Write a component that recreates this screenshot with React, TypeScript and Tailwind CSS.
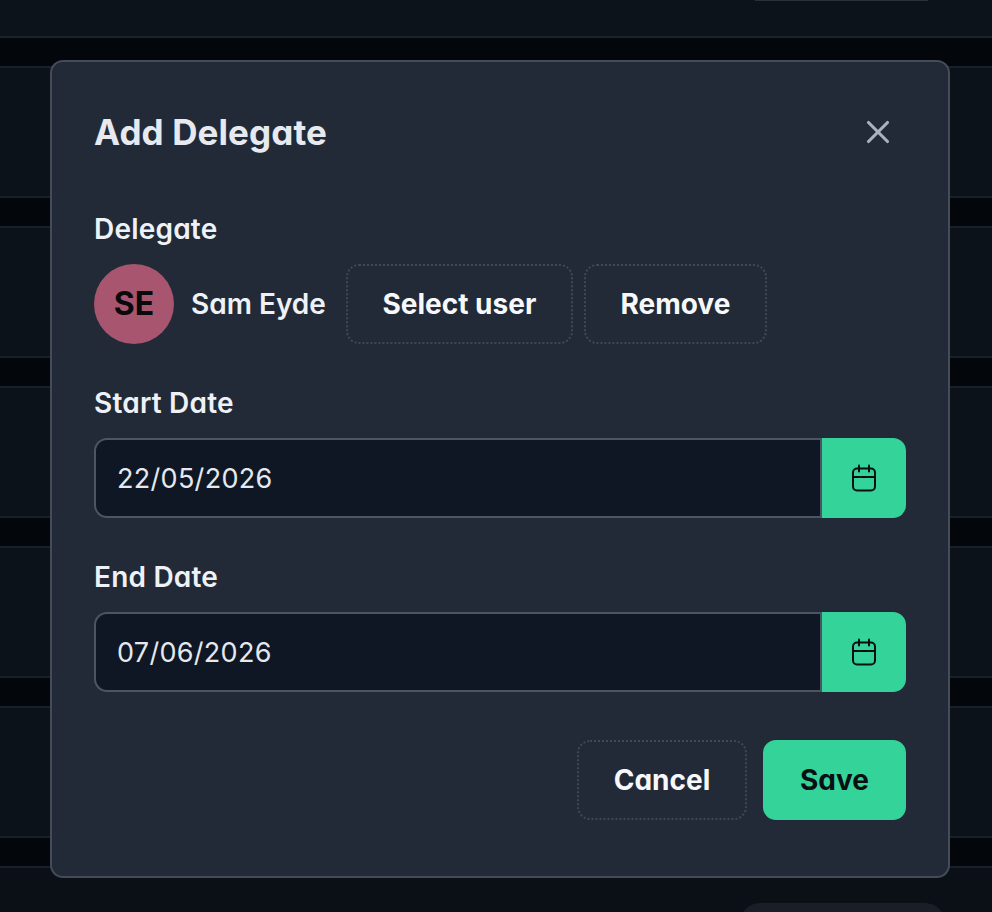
import { X } from "lucide-react"

function CalendarIcon() {
  return (
    <svg width="26" height="28" viewBox="0 0 26 28" fill="none" stroke="#0b0f14" strokeWidth="2" strokeLinecap="round" strokeLinejoin="round">
      <rect x="2" y="4.5" width="22" height="22" rx="4" />
      <path d="M2 13h22" />
      <path d="M8 1.5v6" />
      <path d="M18 1.5v6" />
    </svg>
  )
}

function DateField({ label, value }: { label: string; value: string }) {
  return (
    <div className="flex flex-col">
      <label className="h-[34px] text-[28px] leading-[34px] font-semibold tracking-[0.2px] text-[#eef2f6]">{label}</label>
      <div className="mt-[18px] flex h-[80px]">
        <div className="flex flex-1 items-center rounded-l-[13px] border-2 border-r-0 border-[#4b5563] bg-[#0f1724] pt-[2px] pl-[21px] text-[27px] tracking-[0.3px] text-[#e5e9ef]">
          {value}
        </div>
        <div className="flex w-[86px] items-center justify-center rounded-r-[13px] border-l-2 border-[#4b5563] bg-[#34d399]">
          <CalendarIcon />
        </div>
      </div>
    </div>
  )
}

function OutlineButton({ label, className }: { label: string; className: string }) {
  return (
    <button className={`h-[80px] rounded-[13px] border-2 border-dotted border-[#3f4856] text-[28px] font-bold text-[#f6f8fb] ${className}`}>
      {label}
    </button>
  )
}

export default function App() {
  const rows = [0, 1, 2, 3, 4]

  return (
    <div className="relative h-[912px] w-[992px] overflow-hidden bg-[#03060b] font-['Inter',sans-serif] [font-feature-settings:'cv11']">
      {/* page behind the dialog */}
      <div className="flex flex-col">
        <div className="flex h-[38px] justify-end border-b-2 border-[#1d232c] bg-[#0d131b] pr-[64px]">
          <div className="h-[1px] w-[173px] bg-[#2a313b]" />
        </div>
        {rows.map((r) => (
          <div key={r} className="mt-[28px] h-[132px] border-y-2 border-[#1a2029] bg-[#0c121a]" />
        ))}
        <div className="mt-[28px] flex h-[60px] justify-end border-t-2 border-[#1a2029] bg-[#0b1017] pr-[47px]">
          <div className="mt-[35px] h-[40px] w-[205px] rounded-full bg-[#1a1e26]" />
        </div>
      </div>

      {/* dialog */}
      <div className="absolute top-[60px] left-[50px] flex h-[818px] w-[900px] flex-col rounded-[13px] border-2 border-[#454c58] bg-[#222a37] px-[42px]">
        <div className="mt-[49px] flex h-[42px] items-center justify-between">
          <h2 className="text-[35px] leading-[42px] font-bold tracking-[0.1px] text-[#e6eaf0]">Add Delegate</h2>
          <X size={38} strokeWidth={2} className="mr-[9px] text-[#aab2bd]" />
        </div>

        <label className="mt-[59px] h-[34px] text-[28px] leading-[34px] font-semibold tracking-[0.2px] text-[#eef2f6]">Delegate</label>
        <div className="mt-[18px] flex h-[80px] items-center">
          <div className="flex h-[80px] w-[80px] items-center justify-center rounded-full bg-[#a8566f] text-[32px] font-bold text-[#0a0a0c]">
            SE
          </div>
          <span className="ml-[17px] text-[28px] font-semibold text-[#eef2f6]">Sam Eyde</span>
          <OutlineButton label="Select user" className="ml-[20px] w-[227px]" />
          <OutlineButton label="Remove" className="ml-[11px] w-[183px]" />
        </div>

        <div className="mt-[42px]">
          <DateField label="Start Date" value="22/05/2026" />
        </div>
        <div className="mt-[42px]">
          <DateField label="End Date" value="07/06/2026" />
        </div>

        <div className="mt-[48px] flex justify-end gap-[16px]">
          <OutlineButton label="Cancel" className="w-[170px]" />
          <button className="h-[80px] w-[143px] rounded-[13px] bg-[#34d399] text-[28px] font-bold text-[#0a0f14]">Save</button>
        </div>
      </div>
    </div>
  )
}
